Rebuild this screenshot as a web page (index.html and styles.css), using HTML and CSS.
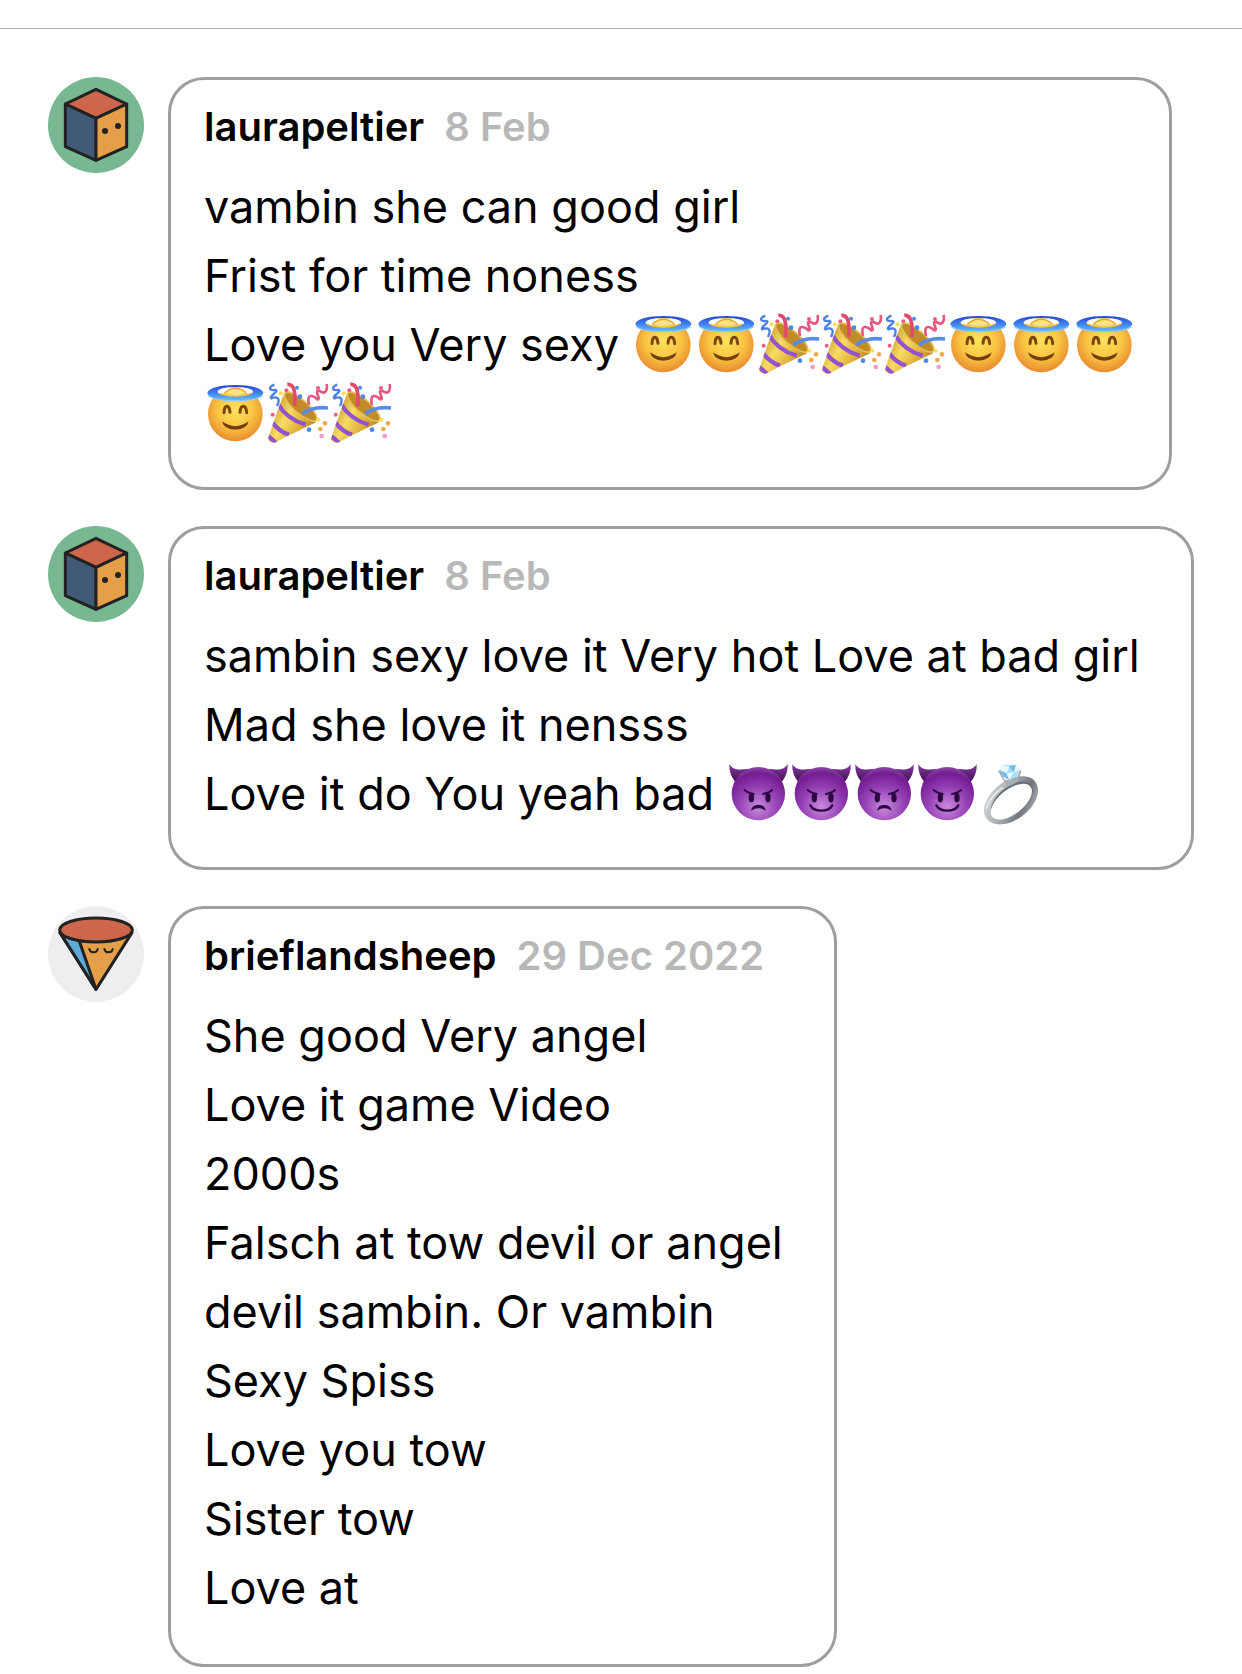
FILE: index.html
```html
<!DOCTYPE html>
<html lang="en">
<head>
<meta charset="utf-8">
<meta name="viewport" content="width=device-width, initial-scale=1">
<title>Comments</title>
<link rel="stylesheet" href="styles.css">
</head>
<body>
<svg class="sprite" aria-hidden="true">
  <defs>
    <radialGradient id="face" cx=".5" cy=".42" r=".6"><stop offset="0" stop-color="#fde35d"/><stop offset=".55" stop-color="#f9c443"/><stop offset="1" stop-color="#e8872c"/></radialGradient>
    <linearGradient id="halo" x1="0" y1="0" x2="0" y2="1"><stop offset="0" stop-color="#2846d0"/><stop offset=".5" stop-color="#3f82ee"/><stop offset="1" stop-color="#72c0fa"/></linearGradient>
    <linearGradient id="gold" x1="0" y1=".2" x2="1" y2=".8"><stop offset="0" stop-color="#b98a20"/><stop offset=".4" stop-color="#f7dc62"/><stop offset=".7" stop-color="#dfae38"/><stop offset="1" stop-color="#a3731c"/></linearGradient>
    <radialGradient id="imp" cx=".5" cy=".75" r=".75"><stop offset="0" stop-color="#c98ade"/><stop offset=".5" stop-color="#9440b3"/><stop offset=".85" stop-color="#741c92"/><stop offset="1" stop-color="#8a4aa3"/></radialGradient>
    <linearGradient id="horn" x1="0" y1="0" x2="0" y2="1"><stop offset="0" stop-color="#8a3aa5"/><stop offset="1" stop-color="#3f1154"/></linearGradient>
    <linearGradient id="silver" x1="0" y1="0" x2="1" y2="1"><stop offset="0" stop-color="#e3e6e9"/><stop offset=".45" stop-color="#a3a9af"/><stop offset=".7" stop-color="#6f767d"/><stop offset="1" stop-color="#c6cacf"/></linearGradient>
    <clipPath id="cone-clip"><path d="M53 34Q44 48 5 164Q-1 182 24 182Q60 163 147 121Z"/></clipPath>
  </defs>
  <symbol id="cube" viewBox="0 0 288 288">
    <circle cx="144" cy="144" r="144" fill="#77b892"/>
    <g stroke="#222" stroke-width="9" stroke-linejoin="round">
      <path fill="#cd664b" d="M144 37 236 81 144 124 52 81Z"/>
      <path fill="#415a78" d="M52 81 144 124V250L52 209Z"/>
      <path fill="#e69f49" d="M144 124 236 81V209L144 250Z"/>
    </g>
    <g fill="#222"><circle cx="171" cy="162" r="9"/><circle cx="210" cy="147" r="9"/></g>
  </symbol>
  <symbol id="cone" viewBox="0 0 288 288">
    <circle cx="144" cy="144" r="144" fill="#eee"/>
    <g stroke="#222" stroke-width="9" stroke-linejoin="round" stroke-linecap="round">
      <path fill="#e69f49" d="M36 80 144 250 252 80Z"/>
      <path fill="#5ea9d8" d="M36 80 144 250 92 100Z"/>
      <ellipse cx="144" cy="72" rx="109" ry="36" fill="#cd664b"/>
      <path fill="none" stroke-width="6" d="M124 129Q126 139 137 139T149 129M169 129Q171 139 182 139T194 129"/>
    </g>
  </symbol>
  <symbol id="angel" viewBox="0 0 189 189">
    <circle cx="94" cy="96" r="82" fill="url(#face)"/>
    <path fill="url(#halo)" fill-rule="evenodd" d="M10 33a84 24 0 1 0 168 0a84 24 0 1 0-168 0M41 29a52 14 0 1 1 106 0a53 15 0 1 1-106 0"/>
    <path fill="#fff" d="M41 29C48 12 140 12 147 29Q140 34 131 35Q94 0 58 35Q46 33 41 29"/>
    <path fill="none" stroke="#eda03b" stroke-width="4" d="M62 32Q94 5 127 32"/>
    <path fill="#fbe487" d="M65 34Q94 10 125 34Q94 43 65 34"/>
    <path fill="none" stroke="#8ccbfa" stroke-width="4" d="M13 42Q35 56 94 56T175 42"/>
    <path fill="none" stroke="#7c450f" stroke-width="9" stroke-linecap="round" d="M60 92C61 67 76 66 78 91M108 91C110 66 126 67 128 92"/>
    <path fill="#73400d" d="M54 118Q94 147 134 118Q130 142 94 143Q59 142 54 118"/>
  </symbol>
  <symbol id="party" viewBox="0 0 189 189">
    <path fill="url(#gold)" d="M53 34Q44 48 5 164Q-1 182 24 182Q60 163 147 121Z"/>
    <g fill="none" stroke="#9352cf" stroke-width="13" clip-path="url(#cone-clip)"><path d="M33 66Q60 112 116 128M15 120Q35 148 66 158M0 160Q12 168 28 184"/></g>
    <ellipse cx="101" cy="74" rx="62" ry="20" transform="rotate(41 101 74)" fill="#c18b28" stroke="#e6be55" stroke-width="5"/>
    <path fill="none" stroke="#e2496d" stroke-width="11" d="M61 7Q89 4 83 72"/>
    <path fill="none" stroke="#598be9" stroke-width="11" d="M106 96Q136 73 183 78"/>
    <path fill="none" stroke="#e7567f" stroke-width="8" d="M126 69C117 31 140 41 151 52C164 51 140 26 156 26C174 39 182 28 179 6"/>
    <path fill="none" stroke="#4b7fe2" stroke-width="7" d="M22 8C2 17 7 26 25 24C39 27 4 43 13 49C30 42 42 48 30 72"/>
    <g fill="#ed5d86"><circle cx="58" cy="25" r="6"/><circle cx="153" cy="18" r="6"/><circle cx="17" cy="98" r="6"/><circle cx="164" cy="162" r="7" fill="#f29ac9"/></g>
    <g fill="#4e88e6"><circle cx="90" cy="17" r="6"/><circle cx="99" cy="44" r="7"/><circle cx="126" cy="143" r="7"/></g>
    <g fill="#efaa4c"><circle cx="174" cy="124" r="7"/><circle cx="160" cy="141" r="7"/><circle cx="154" cy="113" r="6" fill="#f6df54"/><circle cx="41" cy="34" r="6" fill="#f6df54"/></g>
  </symbol>
  <symbol id="imp-head" viewBox="0 0 189 189">
    <path fill="url(#horn)" d="M7 5C14 22 34 25 64 20L25 60Q5 36 7 5M182 5C175 22 155 25 125 20L164 60Q184 36 182 5"/>
    <circle cx="94" cy="95" r="80" fill="url(#imp)"/>
    <g fill="#2c0742"><ellipse cx="73" cy="107" rx="8" ry="14"/><ellipse cx="123" cy="107" rx="8" ry="14"/></g>
    <path fill="none" stroke="#2c0742" stroke-width="6" stroke-linecap="round" d="M53 84Q61 92 80 96M135 84Q127 92 108 96"/>
  </symbol>
  <symbol id="angry-imp" viewBox="0 0 189 189">
    <use href="#imp-head"/><path fill="#2c0742" d="M72 146Q75 128 94 128T116 146Q94 132 72 146"/>
  </symbol>
  <symbol id="happy-imp" viewBox="0 0 189 189">
    <use href="#imp-head"/><path fill="none" stroke="#2c0742" stroke-width="7" stroke-linecap="round" d="M61 130Q70 146 94 146T127 130"/>
  </symbol>
  <symbol id="ring" viewBox="0 0 189 189">
    <ellipse cx="96" cy="115" rx="92" ry="58" transform="rotate(-37 96 115)" fill="url(#silver)"/>
    <ellipse cx="99" cy="114" rx="74" ry="40" transform="rotate(-38 99 114)" fill="#686f76"/>
    <ellipse cx="97" cy="119" rx="73" ry="37" transform="rotate(-38 97 119)" fill="#fff"/>
    <path fill="none" stroke="#eceff2" stroke-width="4" d="M21 141Q34 101 72 76"/>
    <path fill="#a8adb3" d="M57 27 64 23 76 52 93 59 113 49 123 23 128 29 114 58 98 70 79 64Z"/>
    <path fill="#a7ddf8" d="M71 8H110L122 24 114 42 91 55 72 43 62 25Z"/>
    <path fill="#e7faff" d="M71 8 91 14 82 34 62 25ZM110 8 122 24 105 31ZM82 34 105 31 91 55Z"/>
    <path fill="#76b9ef" d="M62 25 82 34 91 55 72 43ZM91 14 110 8 105 31Z"/>
  </symbol>
</svg>

<main class="comments">
  <article class="comment">
    <svg class="avatar" role="img" aria-label="laurapeltier"><use href="#cube"/></svg>
    <div class="bubble">
      <header class="meta"><span class="author">laurapeltier</span><time class="date">8 Feb</time></header>
      <p class="text">vambin she can good girl<br>Frist for time noness<br>Love you Very sexy <svg class="emoji"><use href="#angel"/></svg><svg class="emoji"><use href="#angel"/></svg><svg class="emoji"><use href="#party"/></svg><svg class="emoji"><use href="#party"/></svg><svg class="emoji"><use href="#party"/></svg><svg class="emoji"><use href="#angel"/></svg><svg class="emoji"><use href="#angel"/></svg><svg class="emoji"><use href="#angel"/></svg><br><svg class="emoji"><use href="#angel"/></svg><svg class="emoji"><use href="#party"/></svg><svg class="emoji"><use href="#party"/></svg></p>
    </div>
  </article>

  <article class="comment">
    <svg class="avatar" role="img" aria-label="laurapeltier"><use href="#cube"/></svg>
    <div class="bubble bubble-full">
      <header class="meta"><span class="author">laurapeltier</span><time class="date">8 Feb</time></header>
      <p class="text">sambin sexy love it Very hot Love at bad girl<br>Mad she love it nensss<br>Love it do You yeah bad <svg class="emoji"><use href="#angry-imp"/></svg><svg class="emoji"><use href="#happy-imp"/></svg><svg class="emoji"><use href="#angry-imp"/></svg><svg class="emoji"><use href="#happy-imp"/></svg><svg class="emoji"><use href="#ring"/></svg></p>
    </div>
  </article>

  <article class="comment">
    <svg class="avatar" role="img" aria-label="brieflandsheep"><use href="#cone"/></svg>
    <div class="bubble bubble-tall">
      <header class="meta"><span class="author">brieflandsheep</span><time class="date" datetime="2022-12-29">29 Dec 2022</time></header>
      <p class="text">She good Very angel<br>Love it game Video<br>2000s<br>Falsch at tow devil or angel<br>devil sambin. Or vambin<br>Sexy Spiss<br>Love you tow<br>Sister tow<br>Love at</p>
    </div>
  </article>
</main>
</body>
</html>
```
FILE: styles.css
```css
* {
  box-sizing: border-box;
}

body {
  margin: 0;
  padding-top: 28px;
  background: #fff;
  color: #000;
  font-family: Inter, "Liberation Sans", sans-serif;
}

.sprite {
  position: absolute;
  width: 0;
  height: 0;
}

.comments {
  display: flex;
  flex-direction: column;
  gap: 36px;
  padding: 48px 48px 10px;
  border-top: 1px solid #b0b0b0;
}

.comment {
  display: flex;
  align-items: flex-start;
  gap: 24px;
}

.avatar {
  flex: none;
  width: 96px;
  height: 96px;
}

.bubble {
  padding: 23px 33px 39px;
  border: 3px solid #9e9e9e;
  border-radius: 36px;
}

.bubble-full {
  flex: 1;
}

.bubble-tall {
  padding-right: 51px;
  padding-bottom: 42px;
}

.meta {
  display: flex;
  gap: 20px;
  margin-bottom: 21px;
  font-size: 40px;
  font-weight: 600;
  line-height: 48px;
}

.date {
  color: #b8b8b8;
}

.text {
  margin: 0;
  font-size: 45px;
  line-height: 69px;
}

.emoji {
  width: 63px;
  height: 63px;
  vertical-align: -15px;
}
```
